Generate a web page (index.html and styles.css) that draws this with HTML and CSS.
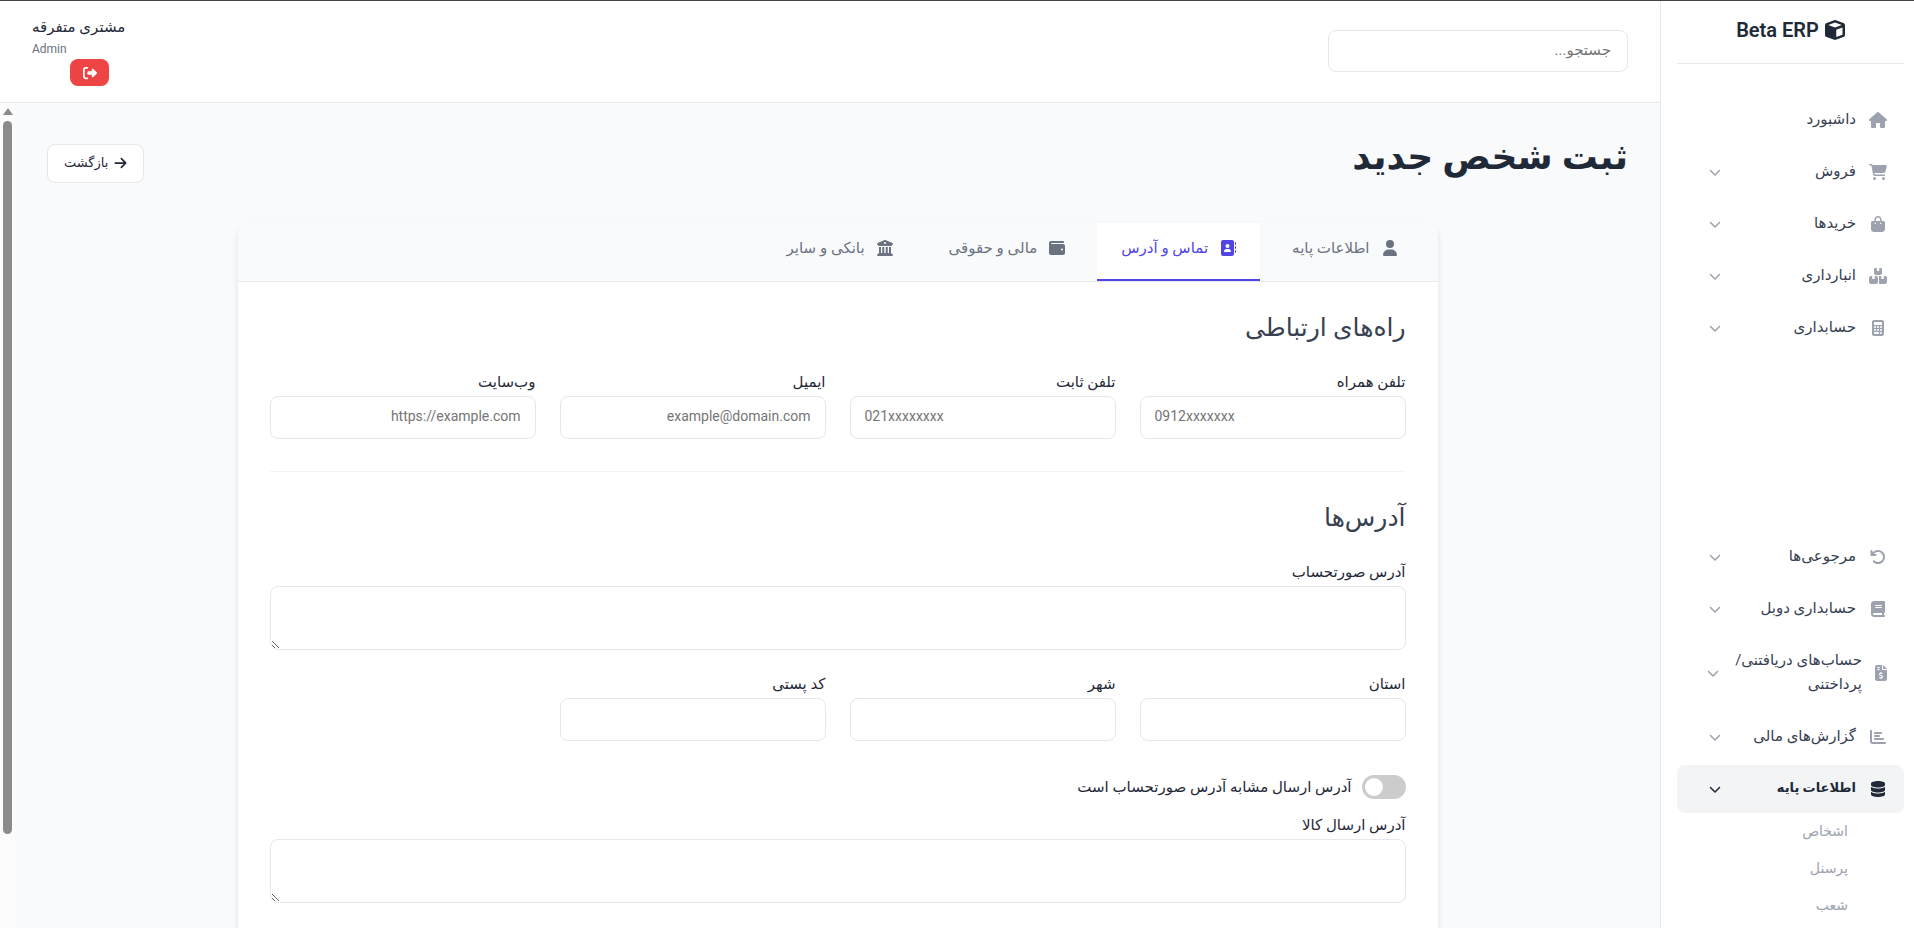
FILE: index.html
```html
<!DOCTYPE html>
<html lang="fa" dir="rtl">
<head>
  <meta charset="UTF-8" />
  <meta name="viewport" content="width=device-width, initial-scale=1.0"/>
  <title>ثبت شخص جدید</title>
  <link rel="stylesheet" href="styles.css">
</head>
<body>
  <!-- Icon sprite -->
  <svg class="sprite" aria-hidden="true">
    <symbol id="i-cube" viewBox="0 0 512 512"><path d="M234.5 5.7c13.9-5 29.1-5 43.1 0l192 68.6C495 83.4 512 107.5 512 134.6V377.4c0 27-17 51.2-42.5 60.3l-192 68.6c-13.9 5-29.1 5-43.1 0l-192-68.6C17 428.6 0 404.5 0 377.4V134.6c0-27 17-51.2 42.5-60.3l192-68.6zM256 66L82.3 128 256 190l173.7-62L256 66zm32 368.6l160-57.1v-188L288 246.6v188z"/></symbol>
    <symbol id="i-home" viewBox="0 0 576 512"><path d="M575.8 255.5c0 18-15 32.1-32 32.1h-32l.7 160.2c0 2.7-.2 5.4-.5 8.1V472c0 22.1-17.9 40-40 40H456c-1.1 0-2.2 0-3.3-.1c-1.4 .1-2.8 .1-4.2 .1H416 392c-22.1 0-40-17.9-40-40V448 384c0-17.7-14.3-32-32-32H256c-17.7 0-32 14.3-32 32v64 24c0 22.1-17.9 40-40 40H160 128.1c-1.5 0-3-.1-4.5-.2c-1.2 .1-2.4 .2-3.6 .2H104c-22.1 0-40-17.9-40-40V360c0-.9 0-1.9 .1-2.8V287.6H32c-18 0-32-14-32-32.1c0-9 3-17 10-24L266.4 8c7-7 15-8 22-8s15 2 21 7L564.8 231.5c8 7 12 15 11 24z"/></symbol>
    <symbol id="i-cart" viewBox="0 0 576 512"><path d="M0 24C0 10.7 10.7 0 24 0H69.5c22 0 41.5 12.8 50.6 32h411c26.3 0 45.5 25 38.6 50.4l-41 152.3c-8.5 31.4-37 53.3-69.5 53.3H170.7l5.4 28.5c2.2 11.3 12.1 19.5 23.6 19.5H488c13.3 0 24 10.7 24 24s-10.7 24-24 24H199.7c-34.6 0-64.3-24.6-70.7-58.5L77.4 54.5c-.7-3.8-4-6.5-7.9-6.5H24C10.7 48 0 37.3 0 24zM128 464a48 48 0 1 1 96 0 48 48 0 1 1 -96 0zm336-48a48 48 0 1 1 0 96 48 48 0 1 1 0-96z"/></symbol>
    <symbol id="i-bag" viewBox="0 0 448 512"><path d="M160 112c0-35.3 28.7-64 64-64s64 28.7 64 64v48H160V112zm-48 48H48c-26.5 0-48 21.5-48 48V416c0 53 43 96 96 96H352c53 0 96-43 96-96V208c0-26.5-21.5-48-48-48H336V112C336 50.1 285.9 0 224 0S112 50.1 112 112v48zm24 48a24 24 0 1 1 0 48 24 24 0 1 1 0-48zm152 24a24 24 0 1 1 48 0 24 24 0 1 1 -48 0z"/></symbol>
    <symbol id="i-boxes" viewBox="0 0 576 512"><path d="M248 0H208c-26.5 0-48 21.5-48 48V160c0 35.3 28.7 64 64 64H352c35.3 0 64-28.7 64-64V48c0-26.5-21.5-48-48-48H328V80c0 8.8-7.2 16-16 16H264c-8.8 0-16-7.2-16-16V0zM64 256c-35.3 0-64 28.7-64 64V448c0 35.3 28.7 64 64 64H224c35.3 0 64-28.7 64-64V320c0-35.3-28.7-64-64-64H184v80c0 8.8-7.2 16-16 16H120c-8.8 0-16-7.2-16-16V256H64zM352 512H512c35.3 0 64-28.7 64-64V320c0-35.3-28.7-64-64-64H472v80c0 8.8-7.2 16-16 16H408c-8.8 0-16-7.2-16-16V256H352c-15 0-28.8 5.1-39.7 13.8c4.9 10.4 7.7 22 7.7 34.2V464c0 12.2-2.8 23.8-7.7 34.2C323.2 506.9 337 512 352 512z"/></symbol>
    <symbol id="i-calc" viewBox="0 0 384 512"><path d="M64 0C28.7 0 0 28.7 0 64V448c0 35.3 28.7 64 64 64H320c35.3 0 64-28.7 64-64V64c0-35.3-28.7-64-64-64H64zM96 64H288c17.7 0 32 14.3 32 32v32c0 17.7-14.3 32-32 32H96c-17.7 0-32-14.3-32-32V96c0-17.7 14.3-32 32-32zm32 160a32 32 0 1 1 -64 0 32 32 0 1 1 64 0zM96 352a32 32 0 1 1 0-64 32 32 0 1 1 0 64zM64 416c0-17.7 14.3-32 32-32h96c17.7 0 32 14.3 32 32s-14.3 32-32 32H96c-17.7 0-32-14.3-32-32zM192 256a32 32 0 1 1 0-64 32 32 0 1 1 0 64zm32 64a32 32 0 1 1 -64 0 32 32 0 1 1 64 0zm64-64a32 32 0 1 1 0-64 32 32 0 1 1 0 64zm32 64a32 32 0 1 1 -64 0 32 32 0 1 1 64 0zM288 448a32 32 0 1 1 0-64 32 32 0 1 1 0 64z"/></symbol>
    <symbol id="i-undo" viewBox="0 0 512 512"><path d="M125.7 160H176c17.7 0 32 14.3 32 32s-14.3 32-32 32H48c-17.7 0-32-14.3-32-32V64c0-17.7 14.3-32 32-32s32 14.3 32 32v51.2L97.6 97.6c87.5-87.5 229.3-87.5 316.8 0s87.5 229.3 0 316.8s-229.3 87.5-316.8 0c-12.5-12.5-12.5-32.8 0-45.3s32.8-12.5 45.3 0c62.5 62.5 163.8 62.5 226.3 0s62.5-163.8 0-226.3s-163.8-62.5-226.3 0L125.7 160z"/></symbol>
    <symbol id="i-book" viewBox="0 0 448 512"><path d="M96 0C43 0 0 43 0 96V416c0 53 43 96 96 96H384h32c17.7 0 32-14.3 32-32s-14.3-32-32-32V384c17.7 0 32-14.3 32-32V32c0-17.7-14.3-32-32-32H384 96zm0 384H352v64H96c-17.7 0-32-14.3-32-32s14.3-32 32-32zm32-240c0-8.8 7.2-16 16-16H336c8.8 0 16 7.2 16 16s-7.2 16-16 16H144c-8.8 0-16-7.2-16-16zm16 48H336c8.8 0 16 7.2 16 16s-7.2 16-16 16H144c-8.8 0-16-7.2-16-16s7.2-16 16-16z"/></symbol>
    <symbol id="i-invoice" viewBox="0 0 384 512"><path d="M64 0C28.7 0 0 28.7 0 64V448c0 35.3 28.7 64 64 64H320c35.3 0 64-28.7 64-64V160H256c-17.7 0-32-14.3-32-32V0H64zM256 0V128H384L256 0zM64 80c0-8.8 7.2-16 16-16h64c8.8 0 16 7.2 16 16s-7.2 16-16 16H80c-8.8 0-16-7.2-16-16zm0 64c0-8.8 7.2-16 16-16h64c8.8 0 16 7.2 16 16s-7.2 16-16 16H80c-8.8 0-16-7.2-16-16zm128 72c8.8 0 16 7.2 16 16v17.3c8.5 1.2 16.7 3.1 24.1 5.1c8.5 2.3 13.6 11 11.3 19.6s-11 13.6-19.6 11.3c-11.1-3-22-5.2-32.1-5.3c-8.4-.1-17.4 1.8-23.6 5.5c-5.7 3.4-8.1 7.3-8.1 12.8c0 3.7 1.3 6.5 7.3 10.1c6.9 4.1 16.6 7.1 29.2 10.9l.5 .1c11.3 3.4 25.3 7.6 36.3 14.6c12.1 7.6 22.4 19.7 22.7 38.2c.3 19.3-9.6 33.3-22.9 41.6c-7.7 4.8-16.4 7.6-25.1 9.1V440c0 8.8-7.2 16-16 16s-16-7.2-16-16V422.2c-11.2-2.1-21.7-5.7-30.9-8.9c-2.1-.7-4.2-1.4-6.2-2.1c-8.4-2.8-12.9-11.9-10.1-20.2s11.9-12.9 20.2-10.1c2.5 .8 4.8 1.6 7.1 2.4c13.6 4.6 24.6 8.4 36.3 8.7c9.1 .3 17.9-1.7 23.7-5.3c5.1-3.2 7.9-7.3 7.8-14c-.1-4.6-1.8-7.8-7.7-11.6c-6.8-4.3-16.5-7.4-29-11.2l-1.6-.5c-11-3.3-24.3-7.3-34.8-13.7c-12-7.2-22.6-18.9-22.7-37.3c-.1-19.4 10.8-32.8 23.8-40.5c7.5-4.4 15.8-7.2 24.1-8.7V232c0-8.8 7.2-16 16-16z"/></symbol>
    <symbol id="i-chart" viewBox="0 0 512 512"><path d="M32 32c17.7 0 32 14.3 32 32V400c0 8.8 7.2 16 16 16H480c17.7 0 32 14.3 32 32s-14.3 32-32 32H80c-44.2 0-80-35.8-80-80V64C0 46.3 14.3 32 32 32zm96 96c0-17.7 14.3-32 32-32l192 0c17.7 0 32 14.3 32 32s-14.3 32-32 32H160c-17.7 0-32-14.3-32-32zm32 64H288c17.7 0 32 14.3 32 32s-14.3 32-32 32H160c-17.7 0-32-14.3-32-32s14.3-32 32-32zm0 96H416c17.7 0 32 14.3 32 32s-14.3 32-32 32H160c-17.7 0-32-14.3-32-32s14.3-32 32-32z"/></symbol>
    <symbol id="i-db" viewBox="0 0 448 512"><path d="M448 80v48c0 44.2-100.3 80-224 80S0 172.2 0 128V80C0 35.8 100.3 0 224 0S448 35.8 448 80zM393.2 214.7c20.8-7.4 39.9-16.9 54.8-28.6V288c0 44.2-100.3 80-224 80S0 332.2 0 288V186.1c14.9 11.8 34 21.2 54.8 28.6C99.7 230.7 159.5 240 224 240s124.3-9.3 169.2-25.3zM0 346.1c14.9 11.8 34 21.2 54.8 28.6C99.7 390.7 159.5 400 224 400s124.3-9.3 169.2-25.3c20.8-7.4 39.9-16.9 54.8-28.6V432c0 44.2-100.3 80-224 80S0 476.2 0 432V346.1z"/></symbol>
    <symbol id="i-chevron" viewBox="0 0 512 512"><path d="M233.4 406.6c12.5 12.5 32.8 12.5 45.3 0l192-192c12.5-12.5 12.5-32.8 0-45.3s-32.8-12.5-45.3 0L256 338.7 86.6 169.4c-12.5-12.5-32.8-12.5-45.3 0s-12.5 32.8 0 45.3l192 192z"/></symbol>
    <symbol id="i-user" viewBox="0 0 448 512"><path d="M224 256A128 128 0 1 0 224 0a128 128 0 1 0 0 256zm-45.7 48C79.8 304 0 383.8 0 482.3C0 498.7 13.3 512 29.7 512H418.3c16.4 0 29.7-13.3 29.7-29.7C448 383.8 368.2 304 269.7 304H178.3z"/></symbol>
    <symbol id="i-contact" viewBox="0 0 512 512"><path d="M96 0C60.7 0 32 28.7 32 64V448c0 35.3 28.7 64 64 64H384c35.3 0 64-28.7 64-64V64c0-35.3-28.7-64-64-64H96zM208 288h64c44.2 0 80 35.8 80 80c0 8.8-7.2 16-16 16H144c-8.8 0-16-7.2-16-16c0-44.2 35.8-80 80-80zm-32-96a64 64 0 1 1 128 0 64 64 0 1 1 -128 0zM512 80c0-8.8-7.2-16-16-16s-16 7.2-16 16v64c0 8.8 7.2 16 16 16s16-7.2 16-16V80zM496 192c-8.8 0-16 7.2-16 16v64c0 8.8 7.2 16 16 16s16-7.2 16-16V208c0-8.8-7.2-16-16-16zm16 144c0-8.8-7.2-16-16-16s-16 7.2-16 16v64c0 8.8 7.2 16 16 16s16-7.2 16-16V336z"/></symbol>
    <symbol id="i-wallet" viewBox="0 0 512 512"><path d="M64 32C28.7 32 0 60.7 0 96V416c0 35.3 28.7 64 64 64H448c35.3 0 64-28.7 64-64V192c0-35.3-28.7-64-64-64H80c-8.8 0-16-7.2-16-16s7.2-16 16-16H448c17.7 0 32-14.3 32-32s-14.3-32-32-32H64zM416 272a32 32 0 1 1 0 64 32 32 0 1 1 0-64z"/></symbol>
    <symbol id="i-bank" viewBox="0 0 512 512"><path d="M243.4 2.6l-224 96c-14 6-21.8 21-18.7 35.8S16.8 160 32 160v8c0 13.3 10.7 24 24 24H456c13.3 0 24-10.7 24-24v-8c15.2 0 28.3-10.7 31.3-25.6s-4.8-29.9-18.7-35.8l-224-96c-8-3.4-17.2-3.4-25.2 0zM128 224H64V420.3c-.6 .3-1.2 .7-1.8 1.1l-48 32c-11.7 7.8-17 22.4-12.9 35.9S17.9 512 32 512H480c14.1 0 26.5-9.2 30.6-22.7s-1.1-28.1-12.9-35.9l-48-32c-.6-.4-1.2-.7-1.8-1.1V224H384V416H344V224H280V416H232V224H168V416H128V224zM256 64a32 32 0 1 1 0 64 32 32 0 1 1 0-64z"/></symbol>
    <symbol id="i-logout" viewBox="0 0 512 512"><path d="M377.9 105.9L500.7 228.7c7.2 7.2 11.3 17.1 11.3 27.3s-4.1 20.1-11.3 27.3L377.9 406.1c-6.4 6.4-15 9.9-24 9.9c-18.7 0-33.9-15.2-33.9-33.9l0-62.1-128 0c-17.7 0-32-14.3-32-32l0-64c0-17.7 14.3-32 32-32l128 0 0-62.1c0-18.7 15.2-33.9 33.9-33.9c9 0 17.6 3.6 24 9.9zM160 96L96 96c-17.7 0-32 14.3-32 32l0 256c0 17.7 14.3 32 32 32l64 0c17.7 0 32 14.3 32 32s-14.3 32-32 32l-64 0c-53 0-96-43-96-96L0 128C0 75 43 32 96 32l64 0c17.7 0 32 14.3 32 32s-14.3 32-32 32z"/></symbol>
    <symbol id="i-arrow" viewBox="0 0 448 512"><path d="M438.6 278.6c12.5-12.5 12.5-32.8 0-45.3l-160-160c-12.5-12.5-32.8-12.5-45.3 0s-12.5 32.8 0 45.3L338.8 224 32 224c-17.7 0-32 14.3-32 32s14.3 32 32 32l306.7 0L233.4 393.4c-12.5 12.5-12.5 32.8 0 45.3s32.8 12.5 45.3 0l160-160z"/></symbol>
  </svg>

  <div class="layout">
    <aside class="sidebar">
      <div class="brand">
        <svg class="icon"><use href="#i-cube"/></svg>
        <span>Beta ERP</span>
      </div>

      <nav class="menu">
        <a class="menu-item" href="#"><svg class="icon"><use href="#i-home"/></svg><span>داشبورد</span></a>
        <a class="menu-item" href="#"><svg class="icon"><use href="#i-cart"/></svg><span>فروش</span><svg class="chevron"><use href="#i-chevron"/></svg></a>
        <a class="menu-item" href="#"><svg class="icon"><use href="#i-bag"/></svg><span>خریدها</span><svg class="chevron"><use href="#i-chevron"/></svg></a>
        <a class="menu-item" href="#"><svg class="icon"><use href="#i-boxes"/></svg><span>انبارداری</span><svg class="chevron"><use href="#i-chevron"/></svg></a>
        <a class="menu-item" href="#"><svg class="icon"><use href="#i-calc"/></svg><span>حسابداری</span><svg class="chevron"><use href="#i-chevron"/></svg></a>
        <div class="menu-gap"></div>
        <a class="menu-item" href="#"><svg class="icon"><use href="#i-undo"/></svg><span>مرجوعی‌ها</span><svg class="chevron"><use href="#i-chevron"/></svg></a>
        <a class="menu-item" href="#"><svg class="icon"><use href="#i-book"/></svg><span>حسابداری دوبل</span><svg class="chevron"><use href="#i-chevron"/></svg></a>
        <a class="menu-item long" href="#"><svg class="icon"><use href="#i-invoice"/></svg><span>حساب‌های دریافتنی/<br>پرداختنی</span><svg class="chevron"><use href="#i-chevron"/></svg></a>
        <a class="menu-item" href="#"><svg class="icon"><use href="#i-chart"/></svg><span>گزارش‌های مالی</span><svg class="chevron"><use href="#i-chevron"/></svg></a>
        <a class="menu-item active" href="#"><svg class="icon"><use href="#i-db"/></svg><span>اطلاعات پایه</span><svg class="chevron"><use href="#i-chevron"/></svg></a>
        <div class="submenu">
          <a href="#">اشخاص</a>
          <a href="#">پرسنل</a>
          <a href="#">شعب</a>
        </div>
      </nav>
    </aside>

    <div class="page">
      <header class="topbar">
        <input type="search" class="search-input" placeholder="جستجو..." aria-label="جستجو">
        <div class="user">
          <span class="user-name">مشتری متفرقه</span>
          <span class="user-role">Admin</span>
          <button type="button" class="logout-btn" aria-label="خروج"><svg class="icon"><use href="#i-logout"/></svg></button>
        </div>
      </header>

      <div class="body">
        <main class="content">
          <div class="page-header">
            <h1>ثبت شخص جدید</h1>
            <a class="back-btn" href="#"><svg class="icon"><use href="#i-arrow"/></svg><span>بازگشت</span></a>
          </div>

          <form class="card">
            <div class="tabs" role="tablist">
              <button type="button" class="tab" role="tab"><svg class="icon"><use href="#i-user"/></svg>اطلاعات پایه</button>
              <button type="button" class="tab active" role="tab"><svg class="icon"><use href="#i-contact"/></svg>تماس و آدرس</button>
              <button type="button" class="tab" role="tab"><svg class="icon"><use href="#i-wallet"/></svg>مالی و حقوقی</button>
              <button type="button" class="tab" role="tab"><svg class="icon"><use href="#i-bank"/></svg>بانکی و سایر</button>
            </div>

            <div class="panel">
              <h3>راه‌های ارتباطی</h3>
              <div class="grid">
                <div class="field">
                  <label for="mobile">تلفن همراه</label>
                  <input type="text" id="mobile" dir="ltr" placeholder="0912xxxxxxx">
                </div>
                <div class="field">
                  <label for="phone">تلفن ثابت</label>
                  <input type="text" id="phone" dir="ltr" placeholder="021xxxxxxxx">
                </div>
                <div class="field">
                  <label for="email">ایمیل</label>
                  <input type="email" id="email" placeholder="example@domain.com">
                </div>
                <div class="field">
                  <label for="website">وب‌سایت</label>
                  <input type="url" id="website" placeholder="https://example.com">
                </div>
              </div>

              <hr>

              <h3>آدرس‌ها</h3>
              <div class="field">
                <label for="billing">آدرس صورتحساب</label>
                <textarea id="billing"></textarea>
              </div>
              <div class="grid region">
                <div class="field">
                  <label for="province">استان</label>
                  <input type="text" id="province">
                </div>
                <div class="field">
                  <label for="city">شهر</label>
                  <input type="text" id="city">
                </div>
                <div class="field">
                  <label for="postal">کد پستی</label>
                  <input type="text" id="postal">
                </div>
              </div>
              <div class="switch-row">
                <input type="checkbox" id="same" class="switch">
                <label for="same">آدرس ارسال مشابه آدرس صورتحساب است</label>
              </div>
              <div class="field">
                <label for="shipping">آدرس ارسال کالا</label>
                <textarea id="shipping"></textarea>
              </div>
            </div>
          </form>
        </main>

        <!-- Scroll track on the left edge -->
        <div class="scroll-track" aria-hidden="true">
          <div class="scroll-arrow"></div>
          <div class="scroll-thumb"></div>
        </div>
      </div>
    </div>
  </div>
</body>
</html>
```
FILE: styles.css
```css
* {
  box-sizing: border-box;
}

body {
  margin: 0;
  height: 100vh;
  overflow: hidden;
  font-family: Roboto, 'DejaVu Sans', sans-serif;
  font-size: 15px;
  line-height: 24px;
  color: #1f2937;
  background-color: #f9fafb;
  border-top: 1px solid #444;
}

input, textarea, button {
  font-family: inherit;
  font-size: 14px;
  color: inherit;
}

a {
  color: inherit;
  text-decoration: none;
}

.sprite {
  display: none;
}

.icon {
  flex: none;
  width: 20px;
  height: 16px;
  fill: currentColor;
}

.layout {
  display: flex;
  height: 100%;
}

/* Sidebar */
.sidebar {
  flex: none;
  width: 254px;
  padding: 0 10px 0 16px;
  background-color: #fff;
  border-left: 1px solid #e5e7eb;
  overflow: hidden;
}

.brand {
  display: flex;
  align-items: center;
  justify-content: center;
  gap: 6px;
  height: 63px;
  padding-bottom: 4px;
  border-bottom: 1px solid #e5e7eb;
  font-size: 20px;
  font-weight: 600;
}

.brand .icon {
  width: 20px;
  height: 20px;
}

.menu {
  display: flex;
  flex-direction: column;
  gap: 4px;
  padding-top: 32px;
}

.menu-item {
  display: flex;
  align-items: center;
  gap: 12px;
  min-height: 48px;
  padding: 10px 16px 10px 32px;
  border-radius: 8px;
  color: #374151;
}

.menu-item span {
  flex: 1;
  padding-bottom: 3px;
}

.menu-item .icon,
.menu-item .chevron {
  color: #9ca3af;
}

.menu-item.long {
  padding-left: 30px;
  min-height: 72px;
  white-space: nowrap;
}

.menu-item.long .icon {
  width: 14px;
}

.menu-item.active {
  background-color: #f3f4f6;
  color: #1f2937;
  font-size: 13px;
  font-weight: 600;
}

.menu-item.active .icon,
.menu-item.active .chevron {
  color: #1f2937;
}

.chevron {
  flex: none;
  width: 12px;
  height: 12px;
  fill: currentColor;
}

.menu-gap {
  height: 173px;
}

.submenu {
  display: flex;
  flex-direction: column;
}

.submenu a {
  height: 37px;
  padding: 2px 56px 0 0;
  color: #9ca3af;
  font-size: 14px;
}

/* Top bar */
.page {
  flex: 1;
  min-width: 0;
  display: flex;
  flex-direction: column;
}

.topbar {
  display: flex;
  justify-content: space-between;
  align-items: center;
  flex: none;
  padding: 14px 32px 16px;
  background-color: #fff;
  border-bottom: 1px solid #e5e7eb;
}

.search-input {
  width: 300px;
  height: 42px;
  padding: 0 16px 2px;
  border: 1px solid #e5e7eb;
  border-radius: 8px;
  background-color: #fff;
  font-size: 15px;
}

.user {
  display: flex;
  flex-direction: column;
}

.user-name {
  font-weight: 500;
}

.user-role {
  align-self: flex-end;
  font-size: 12px;
  line-height: 20px;
  color: #6b7280;
}

.logout-btn {
  display: flex;
  align-items: center;
  justify-content: center;
  width: 39px;
  height: 27px;
  margin-right: 16px;
  border: none;
  border-radius: 8px;
  background-color: #ef4444;
  color: #fff;
  cursor: pointer;
}

.logout-btn .icon {
  width: 14px;
  height: 14px;
}

/* Content */
.body {
  flex: 1;
  min-height: 0;
  display: flex;
}

.content {
  flex: 1;
  overflow: hidden;
  padding: 32px;
}

.page-header {
  display: flex;
  justify-content: space-between;
  align-items: center;
  height: 56px;
  margin-bottom: 32px;
}

h1 {
  margin: 0;
  padding-bottom: 12px;
  font-size: 36px;
  font-weight: 600;
  line-height: 48px;
}

.back-btn {
  display: flex;
  align-items: center;
  gap: 6px;
  height: 39px;
  padding: 0 16px;
  border: 1px solid #e5e7eb;
  border-radius: 8px;
  background-color: #fff;
  font-weight: 500;
  font-size: 13px;
}

.back-btn .icon {
  width: 13px;
  height: 14px;
}

.card {
  max-width: 1200px;
  height: 900px;
  margin: 0 auto;
  border-radius: 12px;
  background-color: #fff;
  box-shadow: 0 4px 6px rgba(0, 0, 0, 0.1);
}

.tabs {
  display: flex;
  gap: 8px;
  padding: 0 16px;
  border-bottom: 1px solid #e5e7eb;
  border-radius: 12px 12px 0 0;
  background-color: #f9fafb;
}

.tab {
  display: flex;
  align-items: center;
  gap: 12px;
  height: 58px;
  padding: 0 24px 6px;
  border: none;
  border-bottom: 2px solid transparent;
  background: none;
  color: #6b7280;
  font-size: 15px;
  font-weight: 500;
  cursor: pointer;
}

.tab .icon {
  width: 16px;
}

.tab.active {
  background-color: #fff;
  border-bottom-color: #4f46e5;
  color: #4f46e5;
}

.panel {
  padding: 24px 32px;
}

h3 {
  margin: 0 0 20px;
  font-size: 25px;
  font-weight: 500;
  line-height: 44px;
  color: #374151;
}

.grid {
  display: grid;
  grid-template-columns: repeat(4, 1fr);
  gap: 24px;
}

.field {
  display: flex;
  flex-direction: column;
  gap: 2px;
}

.field input {
  width: 100%;
  height: 43px;
  padding: 0 14px 4px;
  border: 1px solid #e5e7eb;
  border-radius: 8px;
  background-color: #fff;
}

.field textarea {
  height: 64px;
  padding: 10px 14px;
  border: 1px solid #e5e7eb;
  border-radius: 8px;
  background-color: #fff;
  resize: vertical;
}

hr {
  margin: 32px 0 24px;
  border: none;
  border-top: 1px solid #f3f4f6;
}

.region {
  margin-top: 22px;
}

.switch-row {
  display: flex;
  align-items: center;
  gap: 10px;
  margin: 34px 0 14px;
}

.switch {
  appearance: none;
  width: 44px;
  height: 24px;
  margin: 0;
  padding: 3px;
  border-radius: 12px;
  background-color: #ccc;
  display: flex;
  justify-content: flex-end;
}

.switch::before {
  content: '';
  width: 18px;
  height: 18px;
  border-radius: 50%;
  background-color: #fff;
}

.switch:checked {
  justify-content: flex-start;
  background-color: #4f46e5;
}

/* Scroll track */
.scroll-track {
  flex: none;
  display: flex;
  flex-direction: column;
  align-items: center;
  gap: 6px;
  width: 15px;
  padding-top: 5px;
  background-color: #fcfcfc;
}

.scroll-arrow {
  border: 5px solid transparent;
  border-top: none;
  border-bottom: 7px solid #8b8b8b;
}

.scroll-thumb {
  width: 9px;
  height: 87%;
  border-radius: 5px;
  background-color: #8b8b8b;
}
```
